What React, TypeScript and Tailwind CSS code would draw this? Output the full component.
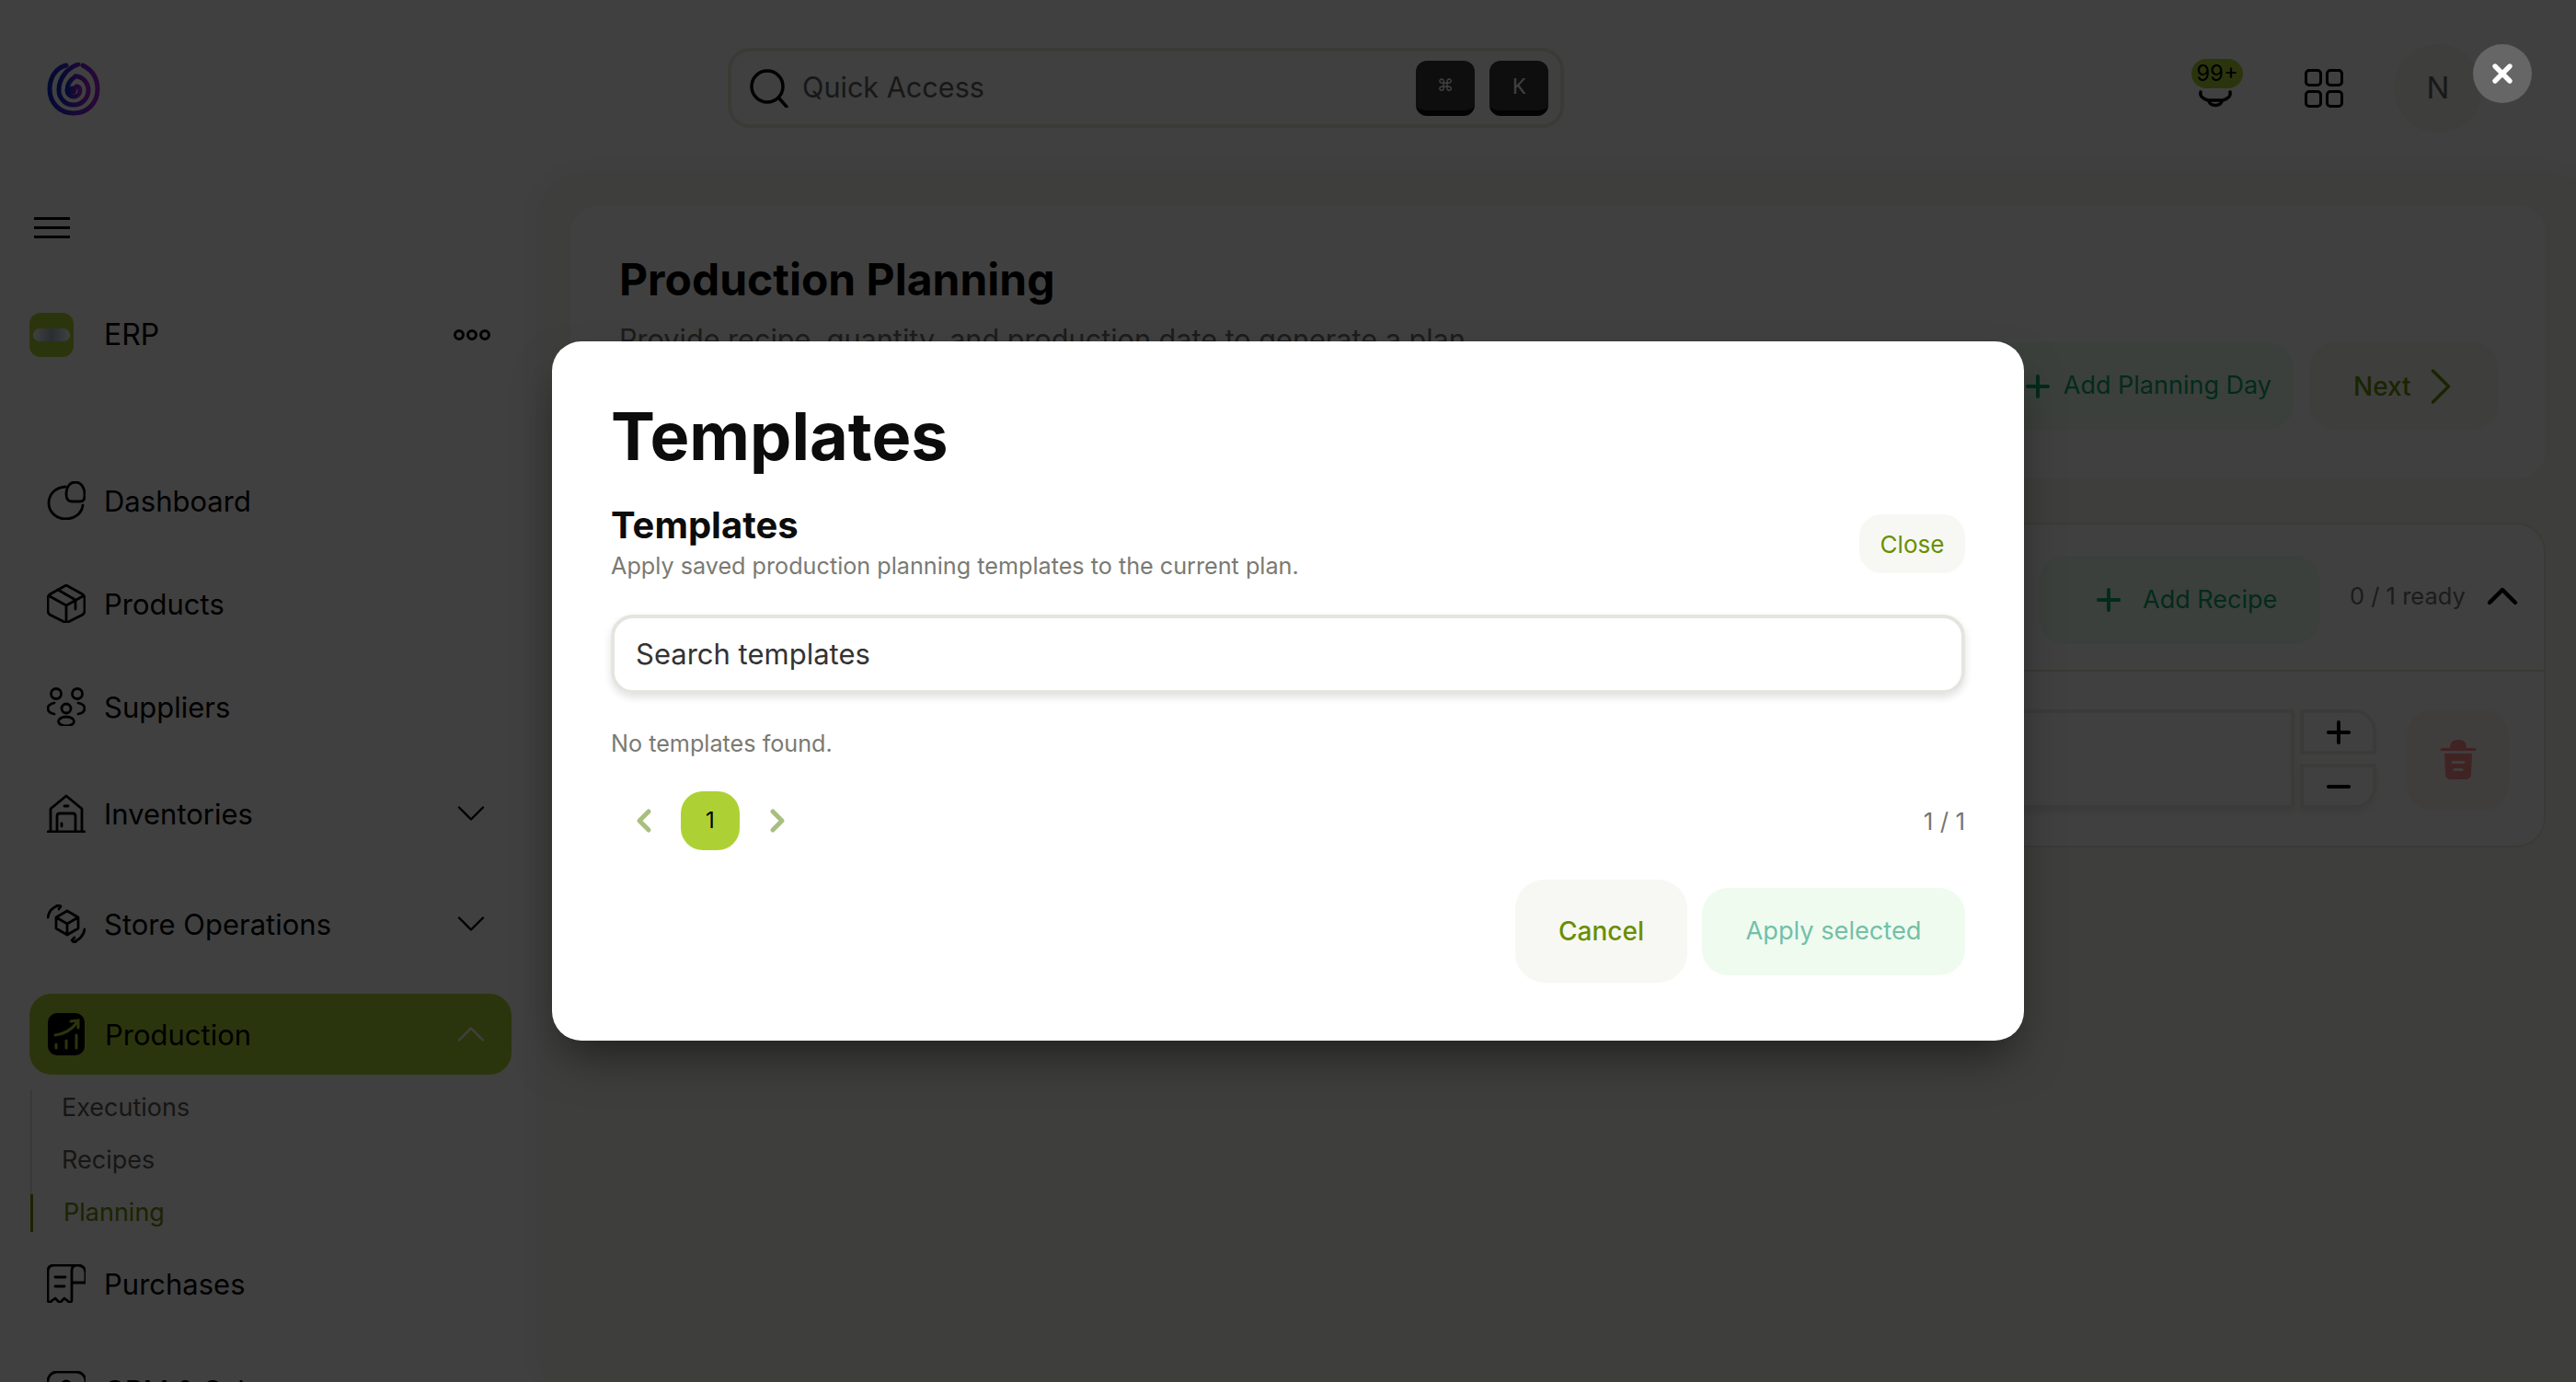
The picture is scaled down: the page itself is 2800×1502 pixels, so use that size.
import { ChevronDown, ChevronLeft, ChevronRight, ChevronUp, Minus, Plus, X } from "lucide-react";
import type { ReactNode } from "react";

const font = "font-['Inter','Liberation_Sans',sans-serif]";

function Logo() {
    return (
        <svg width="58" height="58" viewBox="0 0 58 58" fill="none" strokeWidth="5" strokeLinecap="round">
            <defs>
                <linearGradient id="logo" x1="0" y1="0" x2="1" y2="0">
                    <stop offset="0" stopColor="#0a2bd0" />
                    <stop offset="1" stopColor="#a020d8" />
                </linearGradient>
            </defs>
            <g stroke="url(#logo)">
                <path d="M21 3 C9 6 3 17 3 29 C3 44 14 55 29 55 C44 55 55 44 55 29 C55 17 49 8 39 3" />
                <path d="M34 2 C22 6 13 17 13 30 C13 39 20 46 29 46 C38 46 45 39 45 30 C45 22 39 15 31 15" />
                <path d="M31 15 C25 19 22 25 22 30 C22 34 25 37 29 37 C33 37 36 34 36 30 C36 27 34 26 32 26" />
            </g>
            <circle cx="28" cy="30" r="4.5" fill="url(#logo)" />
        </svg>
    );
}

function Line({ children, size = 42 }: { children: ReactNode; size?: number }) {
    return (
        <svg width={size} height={size} viewBox="0 0 42 42" fill="none" stroke="currentColor" strokeWidth="2.8" strokeLinecap="round" strokeLinejoin="round" className="shrink-0">
            {children}
        </svg>
    );
}

const DashboardIcon = () => (
    <Line>
        <path d="M20 6 C10 7 2 13 2 24 C2 33 10 41 20 41 C30 41 38 35 39 26" />
        <path d="M21 14 C21 6 25 1 31 1 C37 1 41 7 41 14 C41 20 40 22 36 22 L27 22 C23 22 21 20 21 14 Z" />
    </Line>
);
const ProductsIcon = () => (
    <Line>
        <path d="M21 1 L39 11 C40 12 41 13 41 15 L41 29 C41 31 40 32 39 33 L21 42 L3 33 C2 32 1 31 1 29 L1 15 C1 13 2 12 3 11 Z" />
        <path d="M3 13 L21 23 L39 13 M21 23 L21 41 M12 6 L31 17 L31 27" />
    </Line>
);
const SuppliersIcon = () => (
    <Line>
        <circle cx="10" cy="7" r="5.5" />
        <circle cx="33" cy="7" r="5.5" />
        <circle cx="21" cy="23" r="5" />
        <ellipse cx="21" cy="37" rx="8.5" ry="5" />
        <path d="M8 17 C3 18 1 20 1 23 C1 26 3 28 8 29 M34 17 C39 18 41 20 41 23 C41 26 39 28 34 29" />
    </Line>
);
const InventoriesIcon = () => (
    <Line>
        <path d="M1 41 L41 41 M4 41 L4 16 L21 2 L38 16 L38 41 M19 13 L23 13" />
        <path d="M11 41 L11 24 C11 22 12 21 14 21 L28 21 C30 21 31 22 31 24 L31 41 M16 32 L16 35" />
    </Line>
);
const StoreIcon = () => (
    <Line>
        <path d="M22 7 L34 14 L34 26 L22 33 L10 26 L10 14 Z M10 14 L22 21 L34 14 M22 21 L22 33" />
        <path d="M1 14 C2 8 6 3 13 1 M11 0 L15 2 L13 5 M41 27 C40 33 36 38 29 41 M31 42 L27 39 L30 36" />
    </Line>
);
const PurchasesIcon = () => (
    <Line>
        <path d="M32 1 L8 1 C3 1 1 4 1 8 L1 39 C1 41 3 42 5 40 L9 37 L14 42 L19 37 L24 41 C25 42 27 41 27 39 L27 7 C27 3 29 1 33 1 C38 1 42 4 42 9 L42 20 L27 20" />
        <path d="M9 14 L20 14 M9 24 L19 24" />
    </Line>
);
const CrmIcon = () => (
    <Line>
        <rect x="1" y="1" width="41" height="41" rx="10" />
        <circle cx="21" cy="16" r="5" />
    </Line>
);

function ProductionIcon() {
    return (
        <svg width="40" height="46" viewBox="0 0 40 46" className="shrink-0">
            <rect width="40" height="46" rx="10" fill="#000" />
            <g stroke="#add134" strokeWidth="3" strokeLinecap="round" fill="none">
                <path d="M8 24 C17 23 26 18 32 10 M25 9 L33 8 L33 16" />
                <path d="M9 34 L9 38 M20 30 L20 38 M31 24 L31 38" />
            </g>
        </svg>
    );
}

function TrashIcon() {
    return (
        <svg width="40" height="44" viewBox="0 0 40 44" fill="#ff8c8c">
            <path d="M11 9 C11 3 14 0 20 0 C26 0 29 3 29 9 L38 9 C40 9 40 12 38 12 L2 12 C0 12 0 9 2 9 Z" />
            <path fillRule="evenodd" d="M5 15 L35 15 L34 37 C34 41 31 43 28 43 L12 43 C9 43 6 41 6 37 Z M14 23 C12 23 12 26 14 26 L26 26 C28 26 28 23 26 23 Z M16 31 C14 31 14 34 16 34 L24 34 C26 34 26 31 24 31 Z" />
        </svg>
    );
}

function NavRow({ icon, label, y, chevron }: { icon: ReactNode; label: string; y: string; chevron?: boolean }) {
    return (
        <div className={`flex items-center pl-[51px] pr-[52px] text-[31px] leading-none text-black ${y}`}>
            <span className="flex w-[62px] shrink-0 items-center">{icon}</span>
            <span className="flex-1">{label}</span>
            {chevron && <ChevronDown size={52} strokeWidth={1.1} />}
        </div>
    );
}

function Sidebar() {
    return (
        <aside className="w-[590px] shrink-0 text-black">
            <div className="pl-[37px] pt-[43px] flex flex-col gap-[7px]">
                <span className="block h-[3px] w-[39px] bg-black" />
                <span className="block h-[3px] w-[39px] bg-black" />
                <span className="block h-[3px] w-[39px] bg-black" />
            </div>
            <div className="mt-[81px] flex items-center pl-[32px] pr-[57px]">
                <div className="flex h-[48px] w-[48px] items-center justify-center rounded-[12px] bg-[#add134]">
                    <div className="h-[14px] w-[40px] rounded-full bg-gradient-to-r from-white via-[#9fb8c8] to-white" />
                </div>
                <span className="ml-[33px] flex-1 text-[32px] leading-none">ERP</span>
                <div className="flex gap-[2px]">
                    <span className="h-[12px] w-[12px] rounded-full border-[3px] border-black" />
                    <span className="h-[12px] w-[12px] rounded-full border-[3px] border-black" />
                    <span className="h-[12px] w-[12px] rounded-full border-[3px] border-black" />
                </div>
            </div>
            <NavRow icon={<DashboardIcon />} label="Dashboard" y="mt-[135px] h-[42px]" />
            <NavRow icon={<ProductsIcon />} label="Products" y="mt-[70px] h-[42px]" />
            <NavRow icon={<SuppliersIcon />} label="Suppliers" y="mt-[70px] h-[42px]" />
            <NavRow icon={<InventoriesIcon />} label="Inventories" y="mt-[74px] h-[42px]" chevron />
            <NavRow icon={<StoreIcon />} label="Store Operations" y="mt-[78px] h-[42px]" chevron />
            <div className="ml-[32px] mr-[34px] mt-[55px] flex h-[88px] items-center rounded-[24px] bg-[#add134] pl-[20px] pr-[18px] text-[31px] leading-none">
                <span className="flex w-[62px] shrink-0 items-center">
                    <ProductionIcon />
                </span>
                <span className="flex-1">Production</span>
                <ChevronUp size={52} strokeWidth={1.1} className="text-white" />
            </div>
            <div className="ml-[33px] mt-[16px] flex flex-col text-[27px] leading-[40px]">
                <div className="h-[57px] border-l-2 border-[#e4e8cf] pl-[32px] text-[#5a5a5a]">Executions</div>
                <div className="h-[57px] border-l-2 border-[#e4e8cf] pl-[32px] text-[#5a5a5a]">Recipes</div>
                <div className="h-[41px] border-l-[3px] border-[#6b8e00] pl-[33px] text-[#6b8e00]">Planning</div>
            </div>
            <NavRow icon={<PurchasesIcon />} label="Purchases" y="mt-[35px] h-[42px]" />
            <NavRow icon={<CrmIcon />} label="CRM & Sales" y="mt-[74px] h-[42px]" />
        </aside>
    );
}

function Header() {
    return (
        <header className="flex h-[193px] shrink-0 items-start">
            <div className="w-[791px] shrink-0 pl-[51px] pt-[68px]">
                <Logo />
            </div>
            <div className="mt-[52px] flex h-[87px] w-[909px] items-center rounded-[24px] border-[4px] border-[#e6e6d8] bg-white pl-[20px] pr-[13px]">
                <svg width="42" height="42" viewBox="0 0 42 42" fill="none" stroke="#000" strokeWidth="3.5" strokeLinecap="round">
                    <circle cx="19" cy="19" r="17" />
                    <path d="M32 32 L40 41" />
                </svg>
                <span className="ml-[15px] flex-1 text-[30.6px] leading-none text-[#606060]">Quick Access</span>
                <div className="flex gap-[16px]">
                    <kbd className="flex h-[60px] w-[64px] items-center justify-center rounded-[12px] border-b-[6px] border-[#0c0c0c] bg-[#383838] text-[18px] text-[#fff] font-sans">⌘</kbd>
                    <kbd className="flex h-[60px] w-[64px] items-center justify-center rounded-[12px] border-b-[6px] border-[#0c0c0c] bg-[#383838] text-[24px] text-[#fff] font-sans">K</kbd>
                </div>
            </div>
            <div className="ml-[682px] relative mt-[64px] h-[56px] w-[56px]">
                <svg width="40" height="56" viewBox="0 0 40 56" fill="none" stroke="#000" strokeWidth="3.5" strokeLinecap="round" className="absolute left-[6px] top-[0px]">
                    <path d="M4 36 C3 40 5 43 12 45 L28 45 C35 43 37 40 36 36" />
                    <path d="M13 46 C15 52 25 52 27 46" />
                </svg>
                <span className="absolute left-0 top-0 flex h-[32px] w-[56px] items-center justify-center rounded-full bg-[#add134] text-[24px] leading-none text-black">99+</span>
            </div>
            <div className="ml-[67px] mt-[75px] grid grid-cols-2 gap-[4px]">
                <span className="h-[13px] w-[13px] box-content rounded-[5px] border-[3px] border-black" />
                <span className="h-[13px] w-[13px] box-content rounded-[5px] border-[3px] border-black" />
                <span className="h-[13px] w-[13px] box-content rounded-[5px] border-[3px] border-black" />
                <span className="h-[13px] w-[13px] box-content rounded-[5px] border-[3px] border-black" />
            </div>
            <div className="ml-[55px] mt-[48px] flex h-[96px] w-[96px] items-center justify-center rounded-full bg-[#f5f5ee] text-[33px] text-[#606060]">N</div>
        </header>
    );
}

function Main() {
    return (
        <main className="flex-1 rounded-tl-[32px] bg-[#f8f8f4] pl-[30px] pr-[33px] pt-[30px] shadow-[0_0_40px_rgba(0,0,0,0.08)]">
            <section className="flex h-[297px] items-start justify-between rounded-[32px] bg-white pl-[53px] pr-[51px] pt-[57px]">
                <div>
                    <h1 className="text-[48px] font-bold leading-none text-black">Production Planning</h1>
                    <p className="mt-[26px] text-[30.6px] leading-none text-[#70706c]">Provide recipe, quantity, and production date to generate a plan.</p>
                </div>
                <div className="mt-[92px] flex gap-[17px]">
                    <button className="flex h-[95px] w-[360px] items-center justify-end gap-[9px] rounded-[28px] bg-[#ecfff0] pr-[24px] text-[27px] text-[#0fa676]">
                        <Plus size={38} strokeWidth={2.5} />
                        Add Planning Day
                    </button>
                    <button className="flex h-[95px] w-[206px] items-center justify-start rounded-[28px] bg-[#f7f8f3] pl-[48px] text-[28px] font-medium text-[#6b8e00]">
                        Next
                        <ChevronRight size={68} strokeWidth={1.2} className="-ml-[2px]" />
                    </button>
                </div>
            </section>
            <section className="mt-[48px] h-[353px] rounded-[32px] border-2 border-[#e6e6d8] bg-white">
                <div className="flex h-[160px] items-start justify-end border-b-2 border-[#e6e6d8] pr-[17px]">
                    <button className="mt-[34px] flex h-[96px] w-[306px] items-center justify-start gap-[18px] rounded-[28px] bg-[#ecfff0] pl-[57px] text-[27px] text-[#0fa676]">
                        <Plus size={38} strokeWidth={2.5} />
                        Add Recipe
                    </button>
                    <span className="ml-[32px] mt-[65px] w-[125px] whitespace-nowrap text-[25.5px] leading-none text-[#70706c]">0 / 1 ready</span>
                    <ChevronUp size={56} strokeWidth={1.9} className="ml-[13px] mt-[50px] text-black" />
                </div>
                <div className="flex justify-end pr-[38px] pt-[41px]">
                    <div className="h-[108px] w-[500px] border-y-4 border-r-4 border-[#ecece2] shadow-[0_4px_8px_rgba(0,0,0,0.08)]" />
                    <div className="ml-[6px] flex w-[83px] flex-col gap-[10px] text-black">
                        <div className="flex h-[49px] items-center justify-center rounded-tr-[24px] border-4 border-[#ecece2]">
                            <Plus size={38} strokeWidth={2.5} />
                        </div>
                        <div className="flex h-[49px] items-center justify-center rounded-br-[24px] border-4 border-[#ecece2] shadow-[0_4px_8px_rgba(0,0,0,0.08)]">
                            <Minus size={38} strokeWidth={2.5} />
                        </div>
                    </div>
                    <div className="ml-[33px] flex h-[110px] w-[111px] items-center justify-center rounded-[28px] bg-[#fff4f4]">
                        <TrashIcon />
                    </div>
                </div>
            </section>
        </main>
    );
}

function TemplatesModal() {
    return (
        <div className="absolute left-[600px] top-[371px] h-[760px] w-[1600px] rounded-[32px] bg-white px-[64px] pt-[59px] shadow-[0_25px_50px_-12px_rgba(0,0,0,0.5)]">
            <h2 className="text-[72px] font-bold leading-[88px] text-[#0c0c0c]">Templates</h2>
            <div className="mt-[29px] flex items-start justify-between">
                <div>
                    <h3 className="text-[40px] font-bold leading-[48px] text-[#0c0c0c]">Templates</h3>
                    <p className="mt-[2px] text-[25.2px] leading-[36px] text-[#7a7a72]">Apply saved production planning templates to the current plan.</p>
                </div>
                <button className="mt-[12px] flex h-[64px] w-[115px] items-center justify-center rounded-[24px] bg-[#f7f8f3] text-[26px] text-[#6b8e00]">Close</button>
            </div>
            <div className="mt-[35px] flex h-[86px] items-center rounded-[24px] border-[4px] border-[#e5e5df] pl-[23px] text-[31px] text-[#333333] shadow-[0_4px_8px_rgba(0,0,0,0.12)]">Search templates</div>
            <p className="mt-[36px] text-[25.2px] leading-[36px] text-[#7a7a72]">No templates found.</p>
            <div className="mt-[34px] flex h-[64px] items-center justify-between">
                <div className="flex items-center">
                    <ChevronLeft size={40} strokeWidth={3} className="ml-[16px] text-[#a9bf7f]" />
                    <span className="ml-[20px] flex h-[64px] w-[64px] items-center justify-center rounded-[24px] bg-[#add134] text-[24px] text-black">1</span>
                    <ChevronRight size={40} strokeWidth={3} className="ml-[21px] text-[#a9bf7f]" />
                </div>
                <span className="text-[26px] text-[#77776f]">1 / 1</span>
            </div>
            <div className="mt-[32px] flex items-center justify-end gap-[16px]">
                <button className="h-[112px] w-[187px] rounded-[32px] bg-[#f7f8f3] text-[28px] font-medium text-[#6b8e00]">Cancel</button>
                <button className="h-[95px] w-[286px] rounded-[28px] bg-[#f0fbf0] text-[27.2px] text-[#72c0a8]">Apply selected</button>
            </div>
        </div>
    );
}

export default function App() {
    return (
        <div className={`relative h-[1502px] w-[2800px] overflow-hidden bg-white ${font}`}>
            <Header />
            <div className="flex h-[1309px]">
                <Sidebar />
                <Main />
            </div>
            {/* dimmed backdrop */}
            <div className="absolute inset-0 bg-black/75" />
            <button className="absolute left-[2688px] top-[48px] flex h-[64px] w-[64px] items-center justify-center rounded-full bg-[#666666] text-white">
                <X size={32} strokeWidth={4} />
            </button>
            <TemplatesModal />
        </div>
    );
}
